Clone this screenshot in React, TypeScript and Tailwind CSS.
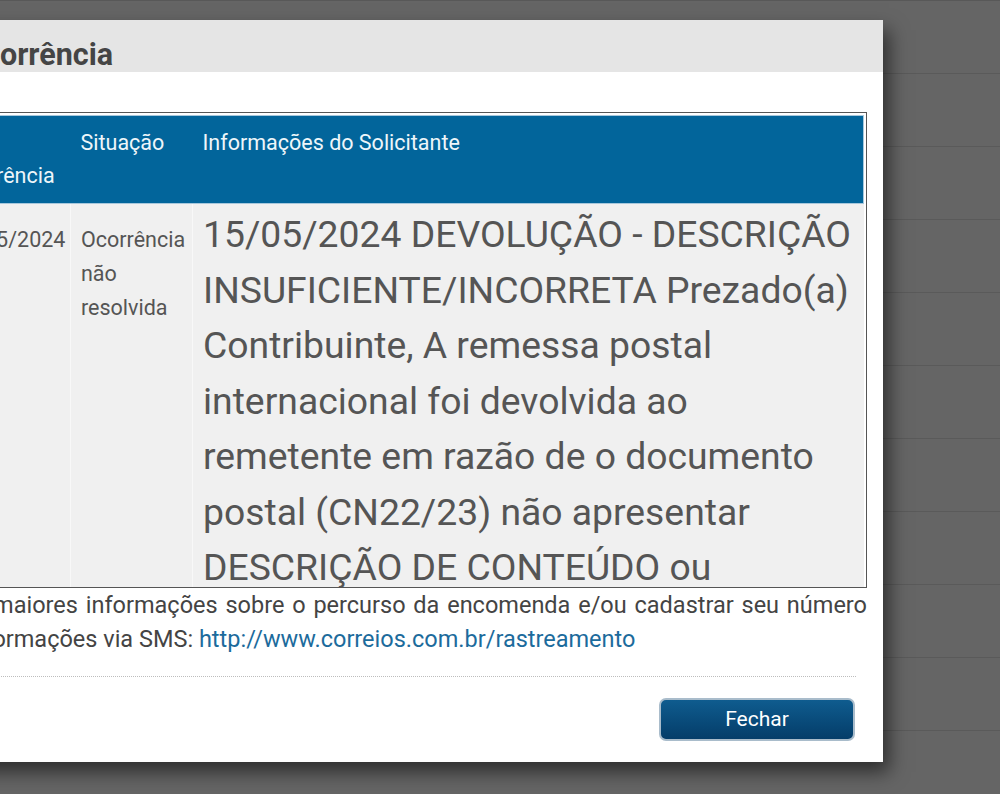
import React from 'react';

const bgRows = Array.from({ length: 11 });

const App: React.FC = () => {
  return (
    <div className="relative w-[1000px] h-[794px] overflow-hidden bg-[#656565] font-['Roboto',sans-serif]">
      {/* page behind the overlay */}
      <div className="flex flex-col border-t border-[#585858]">
        {bgRows.map((_, i) => (
          <div key={i} className="h-[73px] border-b border-[#5a5a5a]" />
        ))}
      </div>

      {/* modal */}
      <div className="absolute left-[-160px] top-[20px] w-[1043px] bg-white shadow-[6px_10px_18px_rgba(0,0,0,0.55)]">
        <div className="h-[52px] bg-[#e5e5e5] flex items-end pl-[123px]">
          <h2 className="text-[30.5px] leading-[35px] font-bold text-[#454545]">Ocorrência</h2>
        </div>

        <div className="pt-[40px] px-[16px]">
          <div className="h-[476px] overflow-hidden border border-[#555] p-[2px]">
            <table className="w-full table-fixed border-collapse">
              <colgroup>
                <col className="w-[81px]" />
                <col className="w-[130px]" />
                <col className="w-[122px]" />
                <col />
              </colgroup>
              <thead>
                <tr className="bg-[#02659b] text-[#eef6fa] text-[21.5px] leading-[33px] text-left">
                  <th className="align-top font-normal px-[10px] pt-[10px] pb-[11px] border-t border-b border-l border-[#a8c8dc]">Objeto</th>
                  <th className="align-top font-normal px-[10px] pt-[10px] pb-[11px] border-t border-b border-[#a8c8dc] border-l-[#3381b0]">Data Ocorrência</th>
                  <th className="align-top font-normal px-[10px] pt-[10px] pb-[11px] border-t border-b border-[#a8c8dc] border-l-[#3381b0]">Situação</th>
                  <th className="align-top font-normal px-[10px] pt-[10px] pb-[11px] border-t border-b border-r border-[#a8c8dc] border-l-[#3381b0]">Informações do Solicitante</th>
                </tr>
              </thead>
              <tbody>
                <tr className="bg-[#f0f0f0] text-[#555]">
                  <td className="align-baseline px-[10px] pt-[3px] text-[21.5px] leading-[34px]">LB</td>
                  <td className="align-baseline px-[10px] pt-[3px] text-[21.5px] leading-[34px] border-l border-[#f8f8f8]">15/05/2024</td>
                  <td className="align-baseline px-[10px] pt-[3px] text-[21.5px] leading-[34px] border-l border-[#f8f8f8]">Ocorrência não resolvida</td>
                  <td className="align-baseline pl-[10px] pr-[3px] pt-[3px] text-[37.3px] leading-[55.5px] border-l border-[#f8f8f8]">
                    15/05/2024 DEVOLUÇÃO - DESCRIÇÃO INSUFICIENTE/INCORRETA Prezado(a) Contribuinte, A remessa postal internacional foi devolvida ao remetente em razão de o documento postal (CN22/23) não apresentar DESCRIÇÃO DE CONTEÚDO ou apresentá-la de forma insuficiente ou incorreta.
                  </td>
                </tr>
              </tbody>
            </table>
          </div>
          <p className="ml-[-27px] indent-[46px] text-[23.5px] leading-[34px] text-[#444] text-justify">
            Para obter maiores informações sobre o percurso da encomenda e/ou cadastrar seu número para receber informações via SMS:{' '}
            <a className="text-[#1c6b9c]" href="#">http://www.correios.com.br/rastreamento</a>
          </p>
        </div>

        <div className="ml-[16px] mr-[27px] mt-[20px] border-t border-dotted border-[#bdbdbd]" />

        <div className="flex justify-end pr-[28px] pt-[21px] pb-[21px]">
          <button className="w-[196px] h-[43px] rounded-[7px] border-2 border-[#a9bccb] bg-gradient-to-b from-[#0f5c8f] to-[#053d69] text-white text-[21px]">
            Fechar
          </button>
        </div>
      </div>
    </div>
  );
};

export default App;
